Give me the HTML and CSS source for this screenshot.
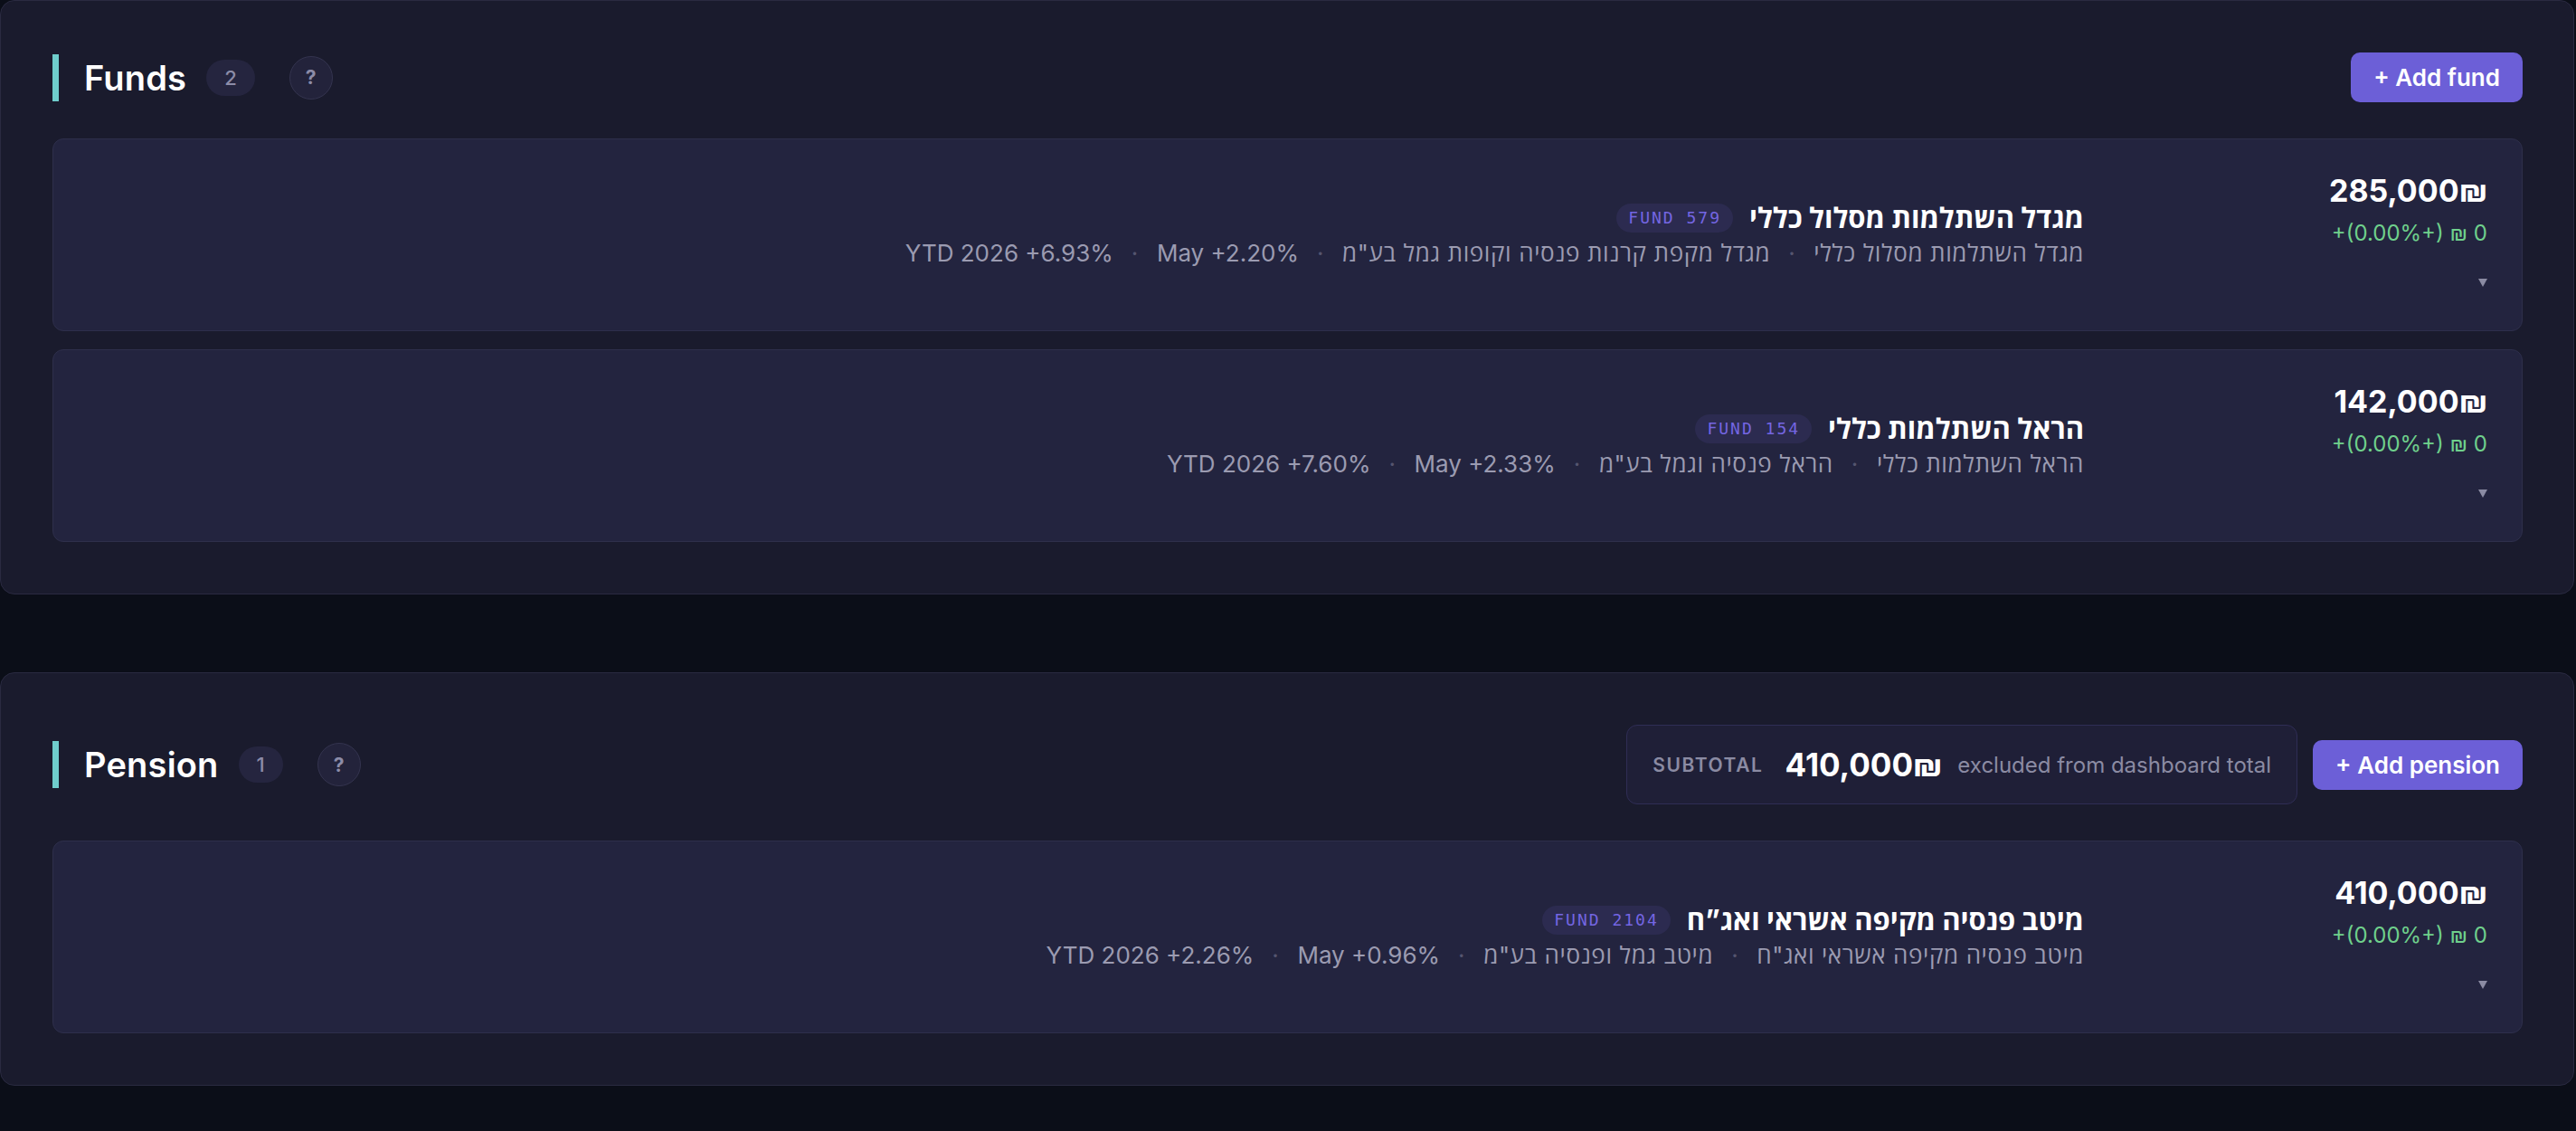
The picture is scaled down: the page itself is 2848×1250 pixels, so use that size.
FILE: index.html
```html
<!DOCTYPE html>
<html>
<head>
    <title>Holdings</title>
    <link rel="stylesheet" href="styles.css">
</head>
<body>
    <main class="page">
        <section class="panel">
            <header class="panel-head">
                <div class="panel-title">
                    <span class="accent"></span>
                    <h2>Funds</h2>
                    <span class="count">2</span>
                    <button class="help">?</button>
                </div>
                <div class="panel-actions">
                    <button class="add-btn">+ Add fund</button>
                </div>
            </header>
            <div class="fund-list">
                <article class="fund">
                    <div class="fund-info" dir="rtl">
                        <div class="fund-name">
                            <span>מגדל השתלמות מסלול כללי</span>
                            <span class="fund-id" dir="ltr">FUND 579</span>
                        </div>
                        <div class="fund-meta">
                            <span>מגדל השתלמות מסלול כללי</span>
                            <span class="sep">·</span>
                            <span>מגדל מקפת קרנות פנסיה וקופות גמל בע"מ</span>
                            <span class="sep">·</span>
                            <span dir="ltr">May +2.20%</span>
                            <span class="sep">·</span>
                            <span dir="ltr">YTD 2026 +6.93%</span>
                        </div>
                    </div>
                    <div class="fund-value">
                        <div class="amount">285,000₪</div>
                        <div class="change" dir="ltr">+(0.00%+) ₪ 0</div>
                        <div class="caret"><svg width="10" height="9" viewBox="0 0 10 9"><path d="M0 0h10L5 9z" fill="currentColor"/></svg></div>
                    </div>
                </article>
                <article class="fund">
                    <div class="fund-info" dir="rtl">
                        <div class="fund-name">
                            <span>הראל השתלמות כללי</span>
                            <span class="fund-id" dir="ltr">FUND 154</span>
                        </div>
                        <div class="fund-meta">
                            <span>הראל השתלמות כללי</span>
                            <span class="sep">·</span>
                            <span>הראל פנסיה וגמל בע"מ</span>
                            <span class="sep">·</span>
                            <span dir="ltr">May +2.33%</span>
                            <span class="sep">·</span>
                            <span dir="ltr">YTD 2026 +7.60%</span>
                        </div>
                    </div>
                    <div class="fund-value">
                        <div class="amount">142,000₪</div>
                        <div class="change" dir="ltr">+(0.00%+) ₪ 0</div>
                        <div class="caret"><svg width="10" height="9" viewBox="0 0 10 9"><path d="M0 0h10L5 9z" fill="currentColor"/></svg></div>
                    </div>
                </article>
            </div>
        </section>

        <section class="panel">
            <header class="panel-head">
                <div class="panel-title">
                    <span class="accent"></span>
                    <h2>Pension</h2>
                    <span class="count">1</span>
                    <button class="help">?</button>
                </div>
                <div class="panel-actions">
                    <div class="subtotal">
                        <span class="subtotal-label">SUBTOTAL</span>
                        <span class="subtotal-amount">410,000₪</span>
                        <span class="subtotal-note">excluded from dashboard total</span>
                    </div>
                    <button class="add-btn">+ Add pension</button>
                </div>
            </header>
            <div class="fund-list">
                <article class="fund">
                    <div class="fund-info" dir="rtl">
                        <div class="fund-name">
                            <span>מיטב פנסיה מקיפה אשראי ואג”ח</span>
                            <span class="fund-id" dir="ltr">FUND 2104</span>
                        </div>
                        <div class="fund-meta">
                            <span>מיטב פנסיה מקיפה אשראי ואג"ח</span>
                            <span class="sep">·</span>
                            <span>מיטב גמל ופנסיה בע"מ</span>
                            <span class="sep">·</span>
                            <span dir="ltr">May +0.96%</span>
                            <span class="sep">·</span>
                            <span dir="ltr">YTD 2026 +2.26%</span>
                        </div>
                    </div>
                    <div class="fund-value">
                        <div class="amount">410,000₪</div>
                        <div class="change" dir="ltr">+(0.00%+) ₪ 0</div>
                        <div class="caret"><svg width="10" height="9" viewBox="0 0 10 9"><path d="M0 0h10L5 9z" fill="currentColor"/></svg></div>
                    </div>
                </article>
            </div>
        </section>
    </main>
</body>
</html>
```

FILE: styles.css
```css
body {
    margin: 0;
    background: #0b0e18;
    color: #ffffff;
    font-family: Inter, "Open Sans", "DejaVu Sans", sans-serif;
}
.page {
    display: flex;
    flex-direction: column;
    gap: 86px;
    margin-right: 2px;
}
.panel {
    background: #1a1b2d;
    border: 1px solid #2a2a41;
    border-radius: 16px;
    padding: 57px 56px 57px 57px;
}
.panel-head {
    display: flex;
    align-items: center;
    justify-content: space-between;
    margin-bottom: 40px;
}
.panel-title {
    display: flex;
    align-items: center;
}
.accent {
    width: 7px;
    height: 52px;
    background: #6fcdcc;
    margin-right: 28px;
}
.panel-title h2 {
    margin: 0;
    font-size: 38px;
    font-weight: 600;
    letter-spacing: 0.2px;
}
.count {
    margin-left: 22px;
    height: 40px;
    padding: 0 20px;
    border-radius: 20px;
    background: #25253f;
    color: #8c8ca8;
    font-size: 22px;
    font-weight: 500;
    line-height: 40px;
}
.help {
    margin-left: 38px;
    width: 48px;
    height: 48px;
    border-radius: 50%;
    border: 1px solid #34344f;
    background: #23233b;
    color: #8c8ca8;
    font-family: Inter, sans-serif;
    font-size: 21px;
    font-weight: 700;
    padding: 0;
}
.panel-actions {
    display: flex;
    align-items: center;
    gap: 17px;
}
.add-btn {
    height: 55px;
    padding: 0 25px;
    border: none;
    border-radius: 10px;
    background: #6c5fd7;
    color: #ffffff;
    font-family: Inter, sans-serif;
    font-size: 26px;
    font-weight: 600;
    cursor: pointer;
}
.subtotal {
    display: flex;
    align-items: center;
    height: 86px;
    padding: 0 28px;
    background: #1f1f37;
    border: 1px solid #2f2d55;
    border-radius: 12px;
}
.subtotal-label {
    color: #8b8ba3;
    font-size: 21px;
    font-weight: 600;
    letter-spacing: 1.6px;
    margin-right: 24px;
}
.subtotal-amount {
    font-size: 35px;
    font-weight: 700;
    margin-right: 17px;
}
.subtotal-note {
    color: #8b8ba3;
    font-size: 24px;
}
.fund-list {
    display: flex;
    flex-direction: column;
    gap: 20px;
}
.fund {
    display: flex;
    align-items: center;
    gap: 36px;
    padding: 36px 38px;
    background: #23243f;
    border: 1px solid #2e2f4b;
    border-radius: 12px;
}
.fund-info {
    flex: 1;
    display: flex;
    flex-direction: column;
    gap: 8px;
}
.fund-name {
    display: flex;
    align-items: center;
    gap: 18px;
    font-size: 31px;
    font-weight: 700;
    line-height: 32px;
}
.fund-id {
    height: 32px;
    padding: 0 13px;
    border-radius: 16px;
    background: #2c2b50;
    color: #7466e2;
    font-family: "DejaVu Sans Mono", monospace;
    font-size: 18px;
    font-weight: 500;
    letter-spacing: 2px;
    line-height: 32px;
}
.fund-meta {
    display: flex;
    gap: 20px;
    color: #9b9bb1;
    font-size: 26px;
    line-height: 30px;
}
/* hebrew parts of the line run a little loose */
.fund-meta > span:not([dir]) {
    letter-spacing: 0.6px;
}
.fund-meta > .sep {
    color: #55556f;
    letter-spacing: 0;
}
.fund-value {
    width: 410px;
    display: flex;
    flex-direction: column;
    align-items: flex-end;
}
.amount {
    font-size: 34px;
    font-weight: 700;
    line-height: 42px;
}
.change {
    margin-top: 12px;
    color: #6fd08c;
    font-size: 24px;
    line-height: 28px;
}
.caret {
    margin-top: 24px;
    height: 33px;
    display: flex;
    align-items: center;
    color: #8b8ba3;
}
```
